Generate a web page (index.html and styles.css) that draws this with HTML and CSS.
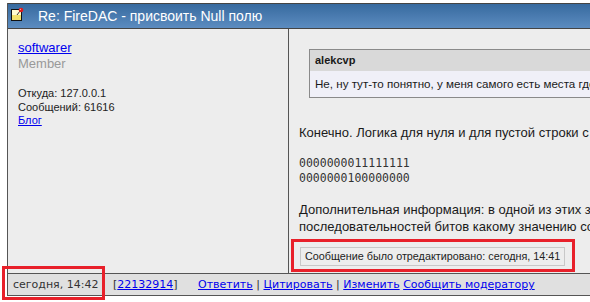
FILE: index.html
```html
<!DOCTYPE html>
<html>
<head>
    <title>Re: FireDAC - присвоить Null полю</title>
    <link rel="stylesheet" href="styles.css">
</head>
<body>
    <div class="msg">
        <div class="msg-title">
            <svg class="note-icon" width="13" height="14" viewBox="0 0 13 14">
                <rect x="0.5" y="2.5" width="10" height="11" fill="#fffbd0" stroke="#111"/>
                <rect x="1" y="8" width="9" height="5" fill="#f2e16a"/>
                <path d="M6 8 L9 4" stroke="#333" stroke-width="1"/>
                <circle cx="10" cy="3" r="2.3" fill="#e01b1b"/>
                <circle cx="9.4" cy="2.4" r="0.7" fill="#ff9a9a"/>
            </svg>
            <span>Re: FireDAC - присвоить Null полю</span>
        </div>

        <div class="msg-body">
            <div class="author">
                <a href="#" class="author-name">softwarer</a>
                <div class="author-rank">Member</div>
                <div class="author-info">
                    Откуда: 127.0.0.1<br>
                    Сообщений: 61616<br>
                    <a href="#">Блог</a>
                </div>
            </div>

            <div class="post">
                <div class="quote">
                    <div class="quote-head">alekcvp</div>
                    <div class="quote-text">Не, ну тут-то понятно, у меня самого есть места где</div>
                </div>

                <p>Конечно. Логика для нуля и для пустой строки с</p>
                <pre>0000000011111111
0000000100000000</pre>
                <p>Дополнительная информация: в одной из этих за<br>последовательностей битов какому значению со</p>

                <div class="edited">Сообщение было отредактировано: сегодня, 14:41</div>
            </div>
        </div>

        <div class="msg-foot">
            <span class="foot-date">сегодня, 14:42</span>
            <span class="foot-id">[<a href="#">22132914</a>]</span>
            <span class="foot-links">
                <a href="#">Ответить</a> | <a href="#">Цитировать</a> | <a href="#">Изменить</a> <a href="#">Сообщить модератору</a>
            </span>
        </div>
    </div>

    <div class="mark mark-date"></div>
    <div class="mark mark-edit"></div>
</body>
</html>
```

FILE: styles.css
```css
body {
    margin: 0;
    background-color: #fff;
    font-family: "Liberation Sans", Arial, sans-serif;
    overflow: hidden;
    position: relative;
    height: 302px;
}

a {
    color: #0000ee;
}

.msg {
    margin: 3px 0 0 7px;
    width: 900px;
    border-left: 1px solid #555;
}

.msg-title {
    height: 24px;
    display: flex;
    align-items: center;
    border-top: 1px solid #444;
    border-bottom: 1px solid #444;
    background: linear-gradient(#376a9f, #5c8cc0);
    color: #fff;
    font-size: 14px;
}

.note-icon {
    margin: 0 14px 0 3px;
    position: relative;
    top: -2px;
}

.msg-body {
    display: grid;
    grid-template-columns: 281px 1fr;
    height: 244px;
    background-color: #ededed;
}

.author {
    border-right: 1px solid #555;
    padding: 9px 10px;
}

.author-name {
    font-size: 13px;
    line-height: 15px;
}

.author-rank {
    font-size: 13px;
    line-height: 15px;
    color: #999;
    margin-bottom: 16px;
}

.author-info {
    font-size: 11px;
    line-height: 13.5px;
    color: #222;
}

.post {
    padding: 20px 10px 0 10px;
    font-size: 13px;
    color: #1a1a1a;
}

.quote {
    margin-left: 10px;
    border: 1px solid #8a8a8a;
    font-size: 11px;
}

.quote-head {
    background-color: #d9d9d9;
    font-weight: bold;
    padding: 4px 5px;
    height: 13px;
}

.quote-text {
    background-color: #f0f0f8;
    padding: 6px 5px;
    height: 14px;
    font-size: 11.6px;
    white-space: nowrap;
}

.post p {
    margin: 27px 0 0 0;
    line-height: 16px;
    white-space: nowrap;
}

.post pre {
    margin: 15px 0 0 0;
    font-family: "DejaVu Sans Mono", monospace;
    font-size: 11.5px;
    line-height: 15px;
    color: #333;
}

.post pre + p {
    margin-top: 15px;
    line-height: 17px;
}

.edited {
    width: fit-content;
    margin: 12px 0 0 1px;
    border: 1px solid #c8c8c8;
    padding: 2px 4px;
    font-size: 10.8px;
    line-height: 13px;
    color: #222;
}

.msg-foot {
    display: flex;
    align-items: center;
    height: 21px;
    border-top: 1px solid #555;
    border-bottom: 1px solid #555;
    background-color: #e0e0e0;
    font-family: "DejaVu Sans", Verdana, sans-serif;
    font-size: 11px;
    color: #333;
}

.foot-date {
    width: 100px;
    padding-left: 5px;
}

.foot-id {
    width: 85px;
}

.mark {
    position: absolute;
    border: 3px solid #e8202a;
}

.mark-date {
    left: 2px;
    top: 266px;
    width: 97px;
    height: 28px;
}

.mark-edit {
    left: 291px;
    top: 239px;
    width: 278px;
    height: 27px;
}
```
